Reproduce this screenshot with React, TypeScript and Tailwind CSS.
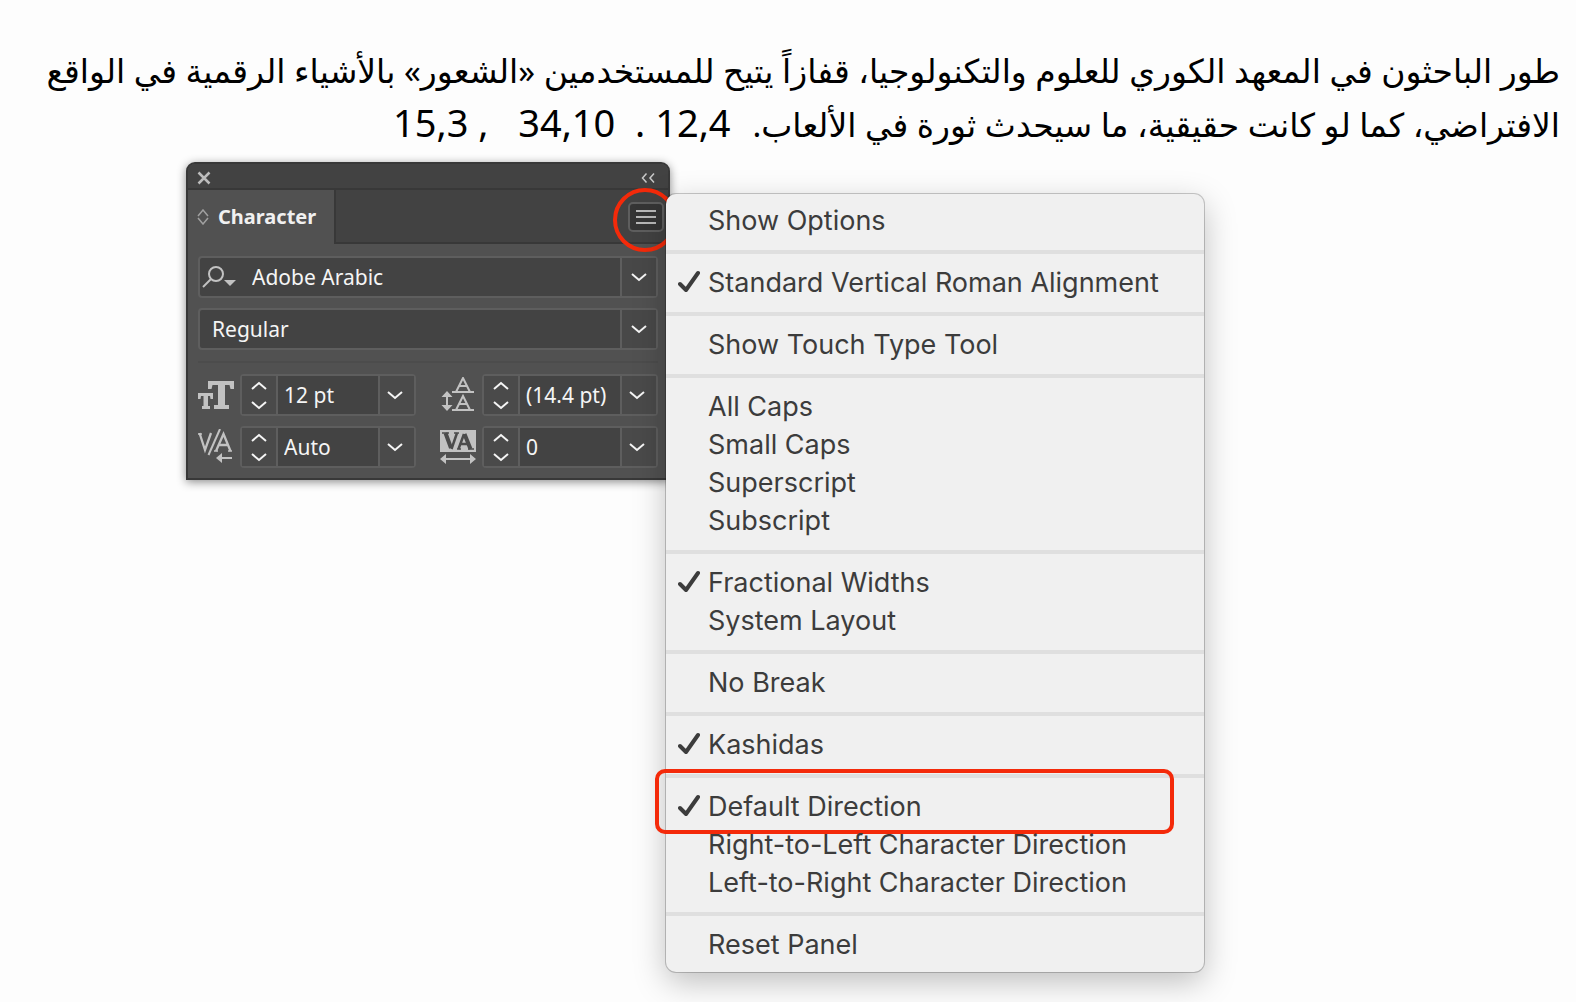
import { ReactNode } from 'react';

interface MenuItem {
  label: string;
  checked?: boolean;
  highlighted?: boolean;
}

const menuGroups: MenuItem[][] = [
  [{ label: 'Show Options' }],
  [{ label: 'Standard Vertical Roman Alignment', checked: true }],
  [{ label: 'Show Touch Type Tool' }],
  [{ label: 'All Caps' }, { label: 'Small Caps' }, { label: 'Superscript' }, { label: 'Subscript' }],
  [{ label: 'Fractional Widths', checked: true }, { label: 'System Layout' }],
  [{ label: 'No Break' }],
  [{ label: 'Kashidas', checked: true }],
  [
    { label: 'Default Direction', checked: true, highlighted: true },
    { label: 'Right-to-Left Character Direction' },
    { label: 'Left-to-Right Character Direction' },
  ],
  [{ label: 'Reset Panel' }],
];

function Chevron({ up = false }: { up?: boolean }) {
  return (
    <svg width="16" height="10" viewBox="0 0 16 10" fill="none" stroke="#f5f5f5" strokeWidth="2">
      <path d={up ? 'M1 8L8 2L15 8' : 'M1 2L8 8L15 2'} />
    </svg>
  );
}

function SizeIcon() {
  return (
    <svg width="36" height="30" viewBox="0 0 36 30" fill="#c2c2c2">
      <path d="M10 1H36V9H32.5L31.5 5H27V25H31V29H16V25H20V5H14.5L13.5 9H10Z" />
      <path d="M0 13H15V19H12.5L12 16H10V26H12V29H4V26H5.500V16H3L2.500 19H0Z" />
    </svg>
  );
}

function LeadingIcon() {
  return (
    <svg width="36" height="36" viewBox="0 0 36 36" fill="none" stroke="#c2c2c2" strokeWidth="2">
      <path d="M12 15H34M12 33H34" />
      <path d="M16 15L23 1L30 15M19 9H27M16 33L23 19L30 33M19 27H27" />
      <path d="M7 18V30" />
      <path d="M1.500 20L7 14L12.500 20ZM1.500 28L7 34L12.500 28Z" fill="#c2c2c2" stroke="none" />
    </svg>
  );
}

function KerningIcon() {
  return (
    <svg width="36" height="36" viewBox="0 0 36 36" fill="none" stroke="#c2c2c2" strokeWidth="2">
      <path d="M1.500 4L7 21L13 4M18 22L25.500 5L32.500 22M20 16H30" strokeWidth="2.300" />
      <path d="M0 5H4M16 22H20M30 22H34" strokeWidth="1.500" />
      <path d="M10.500 26L22 0" />
      <path d="M22 29H34" />
      <path d="M18 29L24 24V34Z" fill="#c2c2c2" stroke="none" />
    </svg>
  );
}

function TrackingIcon() {
  return (
    <svg width="36" height="36" viewBox="0 0 36 36" fill="none">
      <path d="M0 1H36V23H0Z" fill="#c2c2c2" />
      <path d="M2 4H9M14 4H19M17 20H21M28 20H34" stroke="#4c4c4c" strokeWidth="1.500" />
      <path d="M5.500 4L11 19M24.500 5L30.500 20" stroke="#4c4c4c" strokeWidth="4" />
      <path d="M17 4L11.500 20M24 5L18.500 20M20 15H28" stroke="#4c4c4c" strokeWidth="2.500" />
      <path d="M4 30H32" stroke="#c2c2c2" strokeWidth="2" />
      <path d="M0 30L6 25V35ZM36 30L30 25V35Z" fill="#c2c2c2" />
    </svg>
  );
}

function ComboField({ label, value, icon }: { label: string; value: string; icon?: ReactNode }) {
  return (
    <div className="flex h-[42px] rounded border-2 border-[#5e5e5e] bg-[#434343]">
      {icon}
      <input
        aria-label={label}
        defaultValue={value}
        className={`min-w-0 flex-1 bg-transparent pt-0.5 text-[21px] text-[#f5f5f5] outline-none ${icon ? 'pl-4' : 'pl-3'}`}
      />
      <button
        aria-label={`${label} list`}
        className="flex w-9 items-center justify-center border-l-2 border-[#5e5e5e] bg-[#484848]"
      >
        <Chevron />
      </button>
    </div>
  );
}

function StepperField({ label, value, icon }: { label: string; value: string; icon: ReactNode }) {
  return (
    <div className="flex items-center gap-[6px]">
      <span className="flex w-9 justify-center">{icon}</span>
      <div className="flex h-[42px] flex-1 rounded border-2 border-[#5e5e5e] bg-[#434343]">
        <div className="flex w-9 flex-col border-r-2 border-[#5e5e5e] bg-[#4a4a4a]">
          <button aria-label={`Increase ${label}`} className="flex flex-1 items-center justify-center">
            <Chevron up />
          </button>
          <button aria-label={`Decrease ${label}`} className="flex flex-1 items-center justify-center">
            <Chevron />
          </button>
        </div>
        <input
          aria-label={label}
          defaultValue={value}
          className="w-0 min-w-0 flex-1 bg-transparent pt-0.5 pl-[6px] text-[21px] text-[#f5f5f5] outline-none"
        />
        <button
          aria-label={`${label} presets`}
          className="flex w-9 items-center justify-center border-l-2 border-[#5e5e5e] bg-[#4a4a4a] pr-1"
        >
          <Chevron />
        </button>
      </div>
    </div>
  );
}

function CharacterPanel() {
  return (
    <section className="w-[484px] rounded-t-[9px] border-2 border-[#383838] bg-[#515151] font-['Noto_Sans',sans-serif] shadow-[0_2px_10px_rgba(0,0,0,0.45)]">
      <header className="flex h-[26px] items-center justify-between rounded-t-[7px] border-b-2 border-[#383838] bg-[#424242] pt-1 pr-[13px] pl-[9px]">
        <button aria-label="Close">
          <svg width="14" height="14" viewBox="0 0 14 14" stroke="#bdbdbd" strokeWidth="2.500">
            <path d="M1.500 1.500L12.500 12.500M12.500 1.500L1.500 12.500" />
          </svg>
        </button>
        <button aria-label="Collapse">
          <svg width="14" height="10" viewBox="0 0 14 10" fill="none" stroke="#c8c8c8" strokeWidth="1.500">
            <path d="M5.500 0.500L1.500 5L5.500 9.500M13 0.500L9 5L13 9.500" />
          </svg>
        </button>
      </header>

      <div className="flex h-[54px] bg-[#424242]">
        <button className="flex w-[148px] items-center gap-[9px] border-r-2 border-[#383838] bg-[#515151] pl-[9px] text-[20px] font-bold text-[#f0f0f0]">
          <svg width="12" height="16" viewBox="0 0 12 16" fill="none" stroke="#a0a0a0" strokeWidth="1.500">
            <path d="M1 7L6 1L11 7M1 9L6 15L11 9" />
          </svg>
          Character
        </button>
        <div className="flex flex-1 items-center justify-end border-b-2 border-[#383838] pt-0.5 pr-1">
          <div className="relative">
            <button
              aria-label="Panel menu"
              className="flex h-[30px] w-9 items-center justify-center rounded-[5px] border-2 border-[#5e5e5e] bg-[#353535]"
            >
              <svg width="20" height="14" viewBox="0 0 20 14" stroke="#b8b8b8" strokeWidth="2">
                <path d="M0 1H20M0 7H20M0 13H20" />
              </svg>
            </button>
            <span className="absolute -top-[14px] -left-[15px] h-16 w-16 rounded-full border-4 border-[#f42a0a]" />
          </div>
        </div>
      </div>

      <div className="px-[10px] pt-3 pb-[10px]">
        <div className="flex flex-col gap-[10px]">
          <ComboField
            label="Font family"
            value="Adobe Arabic"
            icon={
              <button aria-label="Search fonts" className="flex w-9 items-center pl-0.5">
                <svg width="34" height="24" viewBox="0 0 34 24" fill="none" stroke="#c2c2c2" strokeWidth="2">
                  <circle cx="14" cy="9" r="7" />
                  <path d="M9 14L1 22" />
                  <path d="M22 15H34L28 21Z" fill="#c2c2c2" stroke="none" />
                </svg>
              </button>
            }
          />
          <ComboField label="Font style" value="Regular" />
        </div>
        <div className="my-[11px] h-0.5 bg-[#4c4c4c]" />
        <div className="grid grid-cols-2 gap-x-6 gap-y-[10px]">
          <StepperField label="Font size" value="12 pt" icon={<SizeIcon />} />
          <StepperField label="Leading" value="(14.4 pt)" icon={<LeadingIcon />} />
          <StepperField label="Kerning" value="Auto" icon={<KerningIcon />} />
          <StepperField label="Tracking" value="0" icon={<TrackingIcon />} />
        </div>
      </div>
    </section>
  );
}

function PanelMenu() {
  return (
    <div
      role="menu"
      className="absolute top-8 left-[480px] w-[538px] rounded-[10px] bg-[#f0f0f0] font-['Inter',sans-serif] text-[27px] text-[#3c3c3c] shadow-[0_0_0_1px_rgba(0,0,0,0.2),0_10px_32px_rgba(0,0,0,0.25)]"
    >
      {menuGroups.map((group, i) => (
        <div key={i} className="border-b-4 border-[#dfdfdf] py-[10px] first:pt-2 last:border-b-0 last:pb-2">
          {group.map((item) => (
            <div key={item.label} className="relative">
              <button
                role="menuitemcheckbox"
                aria-checked={!!item.checked}
                className="flex h-[38px] w-full items-center pl-3 text-left whitespace-nowrap"
              >
                <span className="w-[30px]">
                  {item.checked && (
                    <svg
                      width="22"
                      height="26"
                      viewBox="0 0 22 26"
                      fill="none"
                      stroke="#3c3c3c"
                      strokeWidth="4"
                      strokeLinecap="round"
                      strokeLinejoin="round"
                    >
                      <path d="M2 14L8 20L20 3" />
                    </svg>
                  )}
                </span>
                {item.label}
              </button>
              {item.highlighted && (
                <span className="pointer-events-none absolute -top-[19px] right-[30px] -left-[11px] h-[65px] rounded-[10px] border-4 border-[#f42a0a]" />
              )}
            </div>
          ))}
        </div>
      ))}
    </div>
  );
}

export default function App() {
  return (
    <main className="min-h-screen bg-[#fdfdfd] pb-7">
      <p
        dir="rtl"
        lang="ar"
        className="px-4 pt-[44px] font-['Noto_Sans','DejaVu_Sans',sans-serif] text-[33px] leading-[54px] text-black"
      >
        طور الباحثون في المعهد الكوري للعلوم والتكنولوجيا، قفازاً يتيح للمستخدمين «الشعور» بالأشياء الرقمية في الواقع
        <br />
        الافتراضي، كما لو كانت حقيقية، ما سيحدث ثورة في الألعاب.
        <span className="ms-3 text-[38px] leading-none whitespace-pre">{' 12,4 .  34,10   , 15,3'}</span>
      </p>
      <div className="relative mt-[10px] ml-[186px] w-fit">
        <CharacterPanel />
        <PanelMenu />
      </div>
    </main>
  );
}
